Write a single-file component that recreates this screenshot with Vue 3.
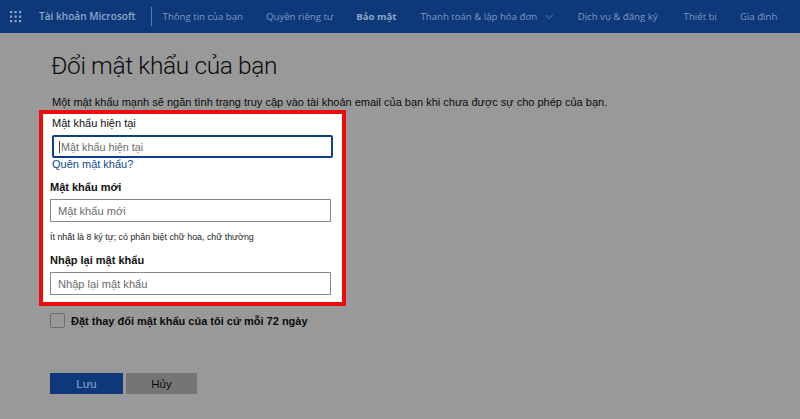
<template>
  <div class="page">
    <header class="topBar">
      <svg class="waffle" width="12" height="12" viewBox="0 0 12 12" fill="#8fa6c8">
        <template v-for="y in [0, 4.5, 9]" :key="y">
          <rect v-for="x in [0, 4.5, 9]" :key="x" :x="x" :y="y" width="2.2" height="2.2" />
        </template>
      </svg>
      <div class="brand">Tài khoản Microsoft</div>
      <nav class="navLinks">
        <a v-for="item in navItems" :key="item.label" :class="{ current: item.current, hasCaret: item.caret }">
          {{ item.label }}
          <svg v-if="item.caret" class="caret" width="8" height="6" viewBox="0 0 9 6" fill="none" stroke="#7f98bd" stroke-width="0.8">
            <path d="M0.5 0.8 L4.5 4.8 L8.5 0.8" />
          </svg>
        </a>
      </nav>
    </header>

    <main class="content">
      <h1>Đổi mật khẩu của bạn</h1>
      <p class="intro">Một mật khẩu mạnh sẽ ngăn tình trạng truy cập vào tài khoản email của bạn khi chưa được sự cho phép của bạn.</p>

      <form class="highlightBox" @submit.prevent>
        <label class="currentLabel">Mật khẩu hiện tại</label>
        <div class="focusField"><span class="cursor"></span>Mật khẩu hiện tại</div>
        <a class="forgot">Quên mật khẩu?</a>

        <label class="fieldLabel newLabel">Mật khẩu mới</label>
        <div class="field">Mật khẩu mới</div>
        <p class="hint">Ít nhất là 8 ký tự; có phân biệt chữ hoa, chữ thường</p>

        <label class="fieldLabel repeatLabel">Nhập lại mật khẩu</label>
        <div class="field">Nhập lại mật khẩu</div>
      </form>

      <div class="checkRow">
        <span class="checkBox"></span>
        <span>Đặt thay đổi mật khẩu của tôi cứ mỗi 72 ngày</span>
      </div>

      <div class="actions">
        <button class="save">Lưu</button>
        <button class="cancel">Hủy</button>
      </div>
    </main>
  </div>
</template>

<script setup>
const navItems = [
  { label: 'Thông tin của bạn' },
  { label: 'Quyền riêng tư' },
  { label: 'Bảo mật', current: true },
  { label: 'Thanh toán & lập hóa đơn', caret: true },
  { label: 'Dịch vụ & đăng ký' },
  { label: 'Thiết bị' },
  { label: 'Gia đình' }
]
</script>

<style>
html,
body {
  margin: 0;
  background: #999999;
}
</style>

<style scoped>
.page {
  width: 800px;
  height: 419px;
  overflow: hidden;
  background: #999999;
  font-family: 'Liberation Sans', Arial, sans-serif;
  color: #0c0c0c;
}

.topBar {
  display: flex;
  align-items: center;
  height: 33px;
  background: #0d397b;
  box-sizing: border-box;
  padding-left: 10px;
  font-family: 'Open Sans', sans-serif;
  font-size: 9.65px;
  color: #7f98bd;
}

.waffle {
  flex: none;
}

.brand {
  margin-left: 17px;
  padding-right: 15px;
  height: 19px;
  line-height: 19px;
  border-right: 1px solid #5c7cab;
  font-size: 10.1px;
  font-weight: 600;
  color: #8fa6c8;
}

.navLinks {
  display: flex;
  gap: 23px;
  margin-left: 11px;
  white-space: nowrap;
}

.navLinks a {
  display: block;
}

.navLinks a:nth-child(5) {
  margin-right: 3px;
}

.navLinks .current {
  font-weight: 700;
  color: #8fa6c8;
  margin-right: 1px;
}

.navLinks .hasCaret {
  margin-right: 2px;
}

.caret {
  margin-left: 5px;
}

.content {
  padding: 0 0 0 50px;
}

h1 {
  margin: 17px 0 0 1px;
  font-family: Roboto, sans-serif;
  font-weight: 300;
  font-size: 24.5px;
  letter-spacing: -0.38px;
  line-height: 32px;
  color: #0c0c0c;
}

.intro {
  margin: 13px 0 0 2px;
  font-size: 11px;
  line-height: 14px;
  white-space: nowrap;
}

.highlightBox {
  display: flex;
  flex-direction: column;
  box-sizing: border-box;
  width: 307px;
  height: 196px;
  margin: 1px 0 0 -11px;
  padding: 2px 11px 0 7px;
  border: 4px solid #ee0a0a;
  background: #ffffff;
}

.currentLabel {
  margin-left: 2px;
  font-size: 11px;
  line-height: 14px;
  font-weight: 500;
  color: #111111;
}

.focusField,
.field {
  display: flex;
  align-items: center;
  box-sizing: border-box;
  height: 23px;
  font-size: 11.1px;
  color: #6b6b6b;
}

.focusField {
  margin: 5px -2px 0 2px;
  padding-left: 5px;
  border: 2px solid #0f3f88;
  border-radius: 2px;
  font-size: 10.8px;
}

.cursor {
  width: 1px;
  height: 12px;
  margin-right: 1px;
  background: #444444;
}

.forgot {
  margin-left: 2px;
  font-size: 11px;
  line-height: 12px;
  color: #0d4a94;
}

.fieldLabel {
  font-size: 11px;
  line-height: 14px;
  font-weight: 700;
  color: #111111;
}

.newLabel {
  margin-top: 10px;
}

.field {
  margin-top: 5px;
  padding-left: 7px;
  border: 1px solid #8a8a8a;
}

.hint {
  margin: 9px 0 0;
  font-size: 8.9px;
  line-height: 12px;
  color: #222222;
}

.repeatLabel {
  margin-top: 10px;
}

.checkRow {
  display: flex;
  align-items: center;
  margin-top: 7px;
  gap: 6px;
  font-size: 11px;
  font-weight: 700;
}

.checkBox {
  width: 13px;
  height: 13px;
  border: 1px solid #6e6e6e;
  border-radius: 2px;
}

.actions {
  display: flex;
  gap: 3px;
  margin-top: 45px;
}

button {
  width: 73px;
  height: 21px;
  padding: 0;
  border: 0;
  font-family: inherit;
  font-size: 11.5px;
}

.save {
  background: #0d397b;
  color: #8fa6c8;
}

.cancel {
  width: 71px;
  background: #757575;
  color: #0c0c0c;
}
</style>
